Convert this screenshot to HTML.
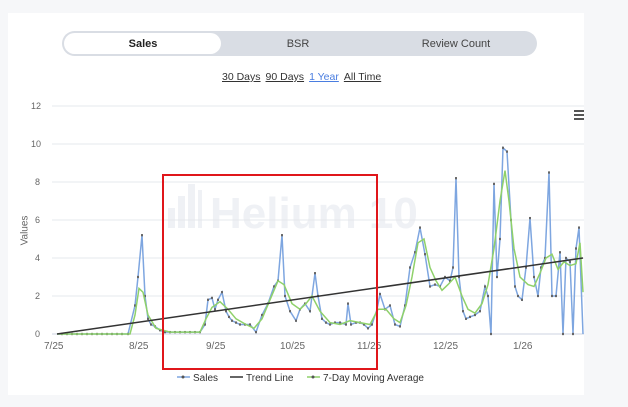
<!DOCTYPE html>
<html><head><style>
body{margin:0;width:628px;height:407px;background:#f6f7f9;font-family:"Liberation Sans",sans-serif;overflow:hidden;position:relative}
.card{position:absolute;left:8px;top:13px;width:576px;height:382px;background:#fff}
.tabs{position:absolute;left:62px;top:31px;width:475px;height:25px;background:#d9dde4;border-radius:13px}
.sel{position:absolute;left:64px;top:33px;width:157px;height:21px;background:#fff;border-radius:11px}
.t{position:absolute;top:38px;font-size:11px;color:#444;transform:translateX(-50%)}
.links{position:absolute;top:71px;left:222px;font-size:10.5px;color:#333}
.links span{text-decoration:underline;margin-right:5px}
.ax{position:absolute;font-size:9px;color:#666}
</style></head><body>
<div class="card"></div>
<div class="tabs"></div><div class="sel"></div>
<div class="t" style="left:143px;font-weight:bold;color:#222">Sales</div>
<div class="t" style="left:298px">BSR</div>
<div class="t" style="left:456px">Review Count</div>
<div class="links"><span>30 Days</span><span>90 Days</span><span style="color:#4a7de0">1 Year</span><span>All Time</span></div>
<div class="ax" style="left:31px;top:101px">12</div>
<div class="ax" style="left:31px;top:139px">10</div>
<div class="ax" style="left:35px;top:177px">8</div>
<div class="ax" style="left:35px;top:215px">6</div>
<div class="ax" style="left:35px;top:253px">4</div>
<div class="ax" style="left:35px;top:291px">2</div>
<div class="ax" style="left:35px;top:329px">0</div>
<div class="ax" style="left:10px;top:225px;transform:rotate(-90deg);font-size:10px">Values</div>
<div class="ax" style="left:44px;top:341px;font-size:10px">7/25</div>
<div class="ax" style="left:129px;top:341px;font-size:10px">8/25</div>
<div class="ax" style="left:206px;top:341px;font-size:10px">9/25</div>
<div class="ax" style="left:280px;top:341px;font-size:10px">10/25</div>
<div class="ax" style="left:357px;top:341px;font-size:10px">11/25</div>
<div class="ax" style="left:433px;top:341px;font-size:10px">12/25</div>
<div class="ax" style="left:513px;top:341px;font-size:10px">1/26</div>
<svg width="628" height="407" style="position:absolute;left:0;top:0">
<defs><marker id="m" markerUnits="userSpaceOnUse" overflow="visible" markerWidth="2" markerHeight="2"><rect x="-1" y="-0.06" width="2" height="0.12" fill="#666"/></marker></defs>
<g fill="#eff1f5"><rect x="168" y="208" width="7" height="20"/><rect x="178" y="196" width="7" height="32"/><rect x="188" y="184" width="7" height="44"/><rect x="198" y="190" width="4" height="38"/></g>
<text x="210" y="228" font-size="44" font-weight="bold" fill="#eff1f5">Helium 10</text>
<g stroke="#e6e8ec" stroke-width="1">
<line x1="52" y1="106" x2="584" y2="106"/><line x1="52" y1="144" x2="584" y2="144"/><line x1="52" y1="182" x2="584" y2="182"/><line x1="52" y1="220" x2="584" y2="220"/><line x1="52" y1="258" x2="584" y2="258"/><line x1="52" y1="296" x2="584" y2="296"/></g>
<line x1="52" y1="334" x2="584" y2="334" stroke="#cdd3e0"/>
<g fill="#555"><rect x="574" y="110" width="10" height="2"/><rect x="574" y="114" width="10" height="2"/><rect x="574" y="118" width="10" height="2"/></g>
<g transform="translate(0,334) scale(1,-19)" fill="none">
<polyline vector-effect="non-scaling-stroke" stroke="#7ea6e0" stroke-width="1.5" marker-mid="url(#m)" points="57,0 62,0 67,0 72,0 77,0 82,0 87,0 92,0 97,0 102,0 107,0 112,0 117,0 122,0 128,0 135,1.5 138,3 142,5.2 145,2 148,0.8 151,0.5 155,0.4 160,0.2 165,0.1 170,0.1 175,0.1 180,0.1 185,0.1 190,0.1 195,0.1 200,0.1 205,0.5 208,1.8 212,1.9 215,1.3 218,1.8 222,2.2 226,1.2 229,0.9 232,0.7 236,0.6 240,0.5 245,0.5 250,0.5 256,0.1 262,1 268,1.6 274,2.5 278,2.8 282,5.2 285,2 290,1.2 296,0.7 300,1.3 305,1.6 310,1.2 315,3.2 318,2 322,0.8 326,0.6 330,0.5 335,0.6 340,0.6 346,0.5 348,1.6 351,0.5 356,0.6 360,0.6 364,0.5 368,0.3 372,0.5 377,1.3 380,2.1 385,1.3 390,1.5 395,0.5 400,0.4 405,1.5 410,3.5 415,4.3 420,5.6 425,4.2 430,2.5 435,2.6 440,2.5 445,3 450,2.8 453,3.5 456,8.2 459,3 463,1.2 466,0.8 470,0.9 475,1 480,1.2 485,2.5 488,2 491,0 494,7.9 497,3 500,5 503,9.8 507,9.6 511,6 515,2.5 518,2 522,1.8 526,3.5 530,6.1 534,3 538,2 541,3.5 545,4 549,8.5 552,2 556,2 560,4.3 563,0 566,4 570,3.8 573,0 576,4.5 579,5.6 583,0"/>
<polyline vector-effect="non-scaling-stroke" stroke="#8fd16a" stroke-width="1.5" points="57,0 130,0 135,1 139,2.4 143,2.2 148,1 156,0.3 170,0.1 200,0.1 206,0.8 212,1.4 220,1.7 228,1.3 236,0.8 246,0.5 254,0.3 262,0.8 270,1.8 278,2.8 284,2.6 292,1.6 300,1.3 306,1.6 312,2 320,1.2 330,0.6 340,0.5 350,0.7 360,0.6 370,0.5 378,1.3 386,1.3 394,0.8 400,0.6 406,1.5 412,3 418,4.8 424,5 430,3.5 436,2.8 442,2.3 448,2.6 455,3 462,2 468,1.3 475,1.1 482,1.6 488,2.6 494,4.5 500,7 505,8.6 509,7 514,4.5 520,3 528,2.6 534,2.5 540,3.2 546,4 552,4.2 558,3.4 564,3.8 570,3.6 576,3.7 580,4.8 583,2.2"/>
</g>
<line x1="57" y1="334" x2="583" y2="258" stroke="#333" stroke-width="1.5"/>
<rect x="163" y="175" width="214" height="194" fill="none" stroke="#e0161b" stroke-width="2"/>
<line x1="177" y1="377" x2="190" y2="377" stroke="#7ea6e0" stroke-width="1.5"/><circle cx="183" cy="377" r="1.5" fill="#555"/>
<text x="193" y="381" font-size="10" fill="#333">Sales</text>
<line x1="230" y1="377" x2="243" y2="377" stroke="#333" stroke-width="1.5"/>
<text x="246" y="381" font-size="10" fill="#333">Trend Line</text>
<line x1="307" y1="377" x2="320" y2="377" stroke="#8fd16a" stroke-width="1.5"/><circle cx="313" cy="377" r="1.5" fill="#555"/>
<text x="323" y="381" font-size="10" fill="#333">7-Day Moving Average</text>
</svg>
</body></html>
